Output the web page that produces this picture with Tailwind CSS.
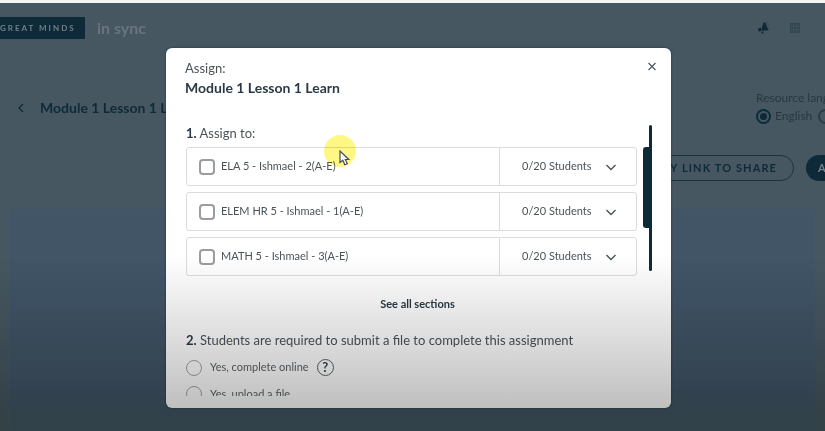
<!DOCTYPE html>
<html lang="en">
<head>
<meta charset="utf-8">
<title>Assign Module 1 Lesson 1 Learn</title>
<script src="https://cdn.jsdelivr.net/npm/@tailwindcss/browser@4"></script>
</head>
<body class="relative h-screen overflow-hidden bg-[#465761] font-['Lato',sans-serif] text-[#2b3a44]">
<div class="flex h-full flex-col border-t-3 border-[#f4f4f4]">
  <header class="flex h-[50px] shrink-0 items-center justify-between pr-6">
    <div class="flex items-center gap-3">
      <div class="flex h-[22px] w-[85px] items-center bg-[#0e2a38] text-[8px] font-bold tracking-[2px] whitespace-nowrap text-[#71808a]">GREAT MINDS</div>
      <span class="text-base font-bold text-[#68757e]">in sync</span>
    </div>
    <div class="flex items-center gap-[18px]">
      <button type="button" aria-label="Announcements" class="text-[#0e2a38]">
        <svg class="size-3.5" viewBox="0 0 14 14" fill="currentColor"><path d="M6.500 1.500 8 1.300 11.500 9.300 5.300 9.800 4.800 7z"/><path d="M1.200 7.600 3.900 6.700 5 9.200 2.300 10.500 1.200 9.700zM4.200 10.800 6.200 10.200 6.500 12.300 4.900 12.700z"/><path d="M9.200 2.700 10 1M10.300 4.800 12.300 3.300M11.700 7.200 13.500 7" stroke="currentColor" stroke-width=".7" opacity=".6"/></svg>
      </button>
      <button type="button" aria-label="Apps" class="text-[#2a3d49]">
        <svg class="size-3" viewBox="0 0 12 12" fill="none" stroke="currentColor"><path d="M1.500 1.500h2v2h-2zM5 1.500h2v2H5zM8.500 1.500h2v2h-2zM1.500 5h2v2h-2zM5 5h2v2H5zM8.500 5h2v2h-2zM1.500 8.500h2v2h-2zM5 8.500h2v2H5zM8.500 8.500h2v2h-2z" stroke-width=".8"/></svg>
      </button>
    </div>
  </header>
  <main class="flex min-h-0 grow flex-col overflow-hidden pt-9">
    <div class="flex shrink-0 items-start justify-between">
      <div class="flex items-center gap-3.5 pt-[9px] pl-4">
        <a href="#" aria-label="Back" class="text-[#0e2a38]"><svg class="size-2.5" viewBox="0 0 10 10" fill="none" stroke="currentColor" stroke-width="1.3"><path d="M7 1 3 5l4 4"/></svg></a>
        <h1 class="text-sm leading-5 font-bold whitespace-nowrap text-[#0e2a38]">Module 1 Lesson 1 Learn</h1>
      </div>
      <fieldset class="-mr-[42px] w-[111px] min-w-0 shrink-0 text-xs leading-[18px] whitespace-nowrap text-[#283842]">
        <legend>Resource language</legend>
        <div class="flex items-center gap-1.5">
          <label class="flex items-center gap-1"><input type="radio" name="lang" checked class="size-[15px] shrink-0 appearance-none rounded-full border-2 border-[#0e2a38] bg-[#0e2a38] bg-clip-content p-[2px]">English</label>
          <label class="flex items-center gap-1"><input type="radio" name="lang" class="size-[15px] shrink-0 appearance-none rounded-full border-2 border-[#2b3d48]">Spanish</label>
        </div>
      </fieldset>
    </div>
    <div class="-mr-[74px] flex shrink-0 justify-end gap-3 pt-[30px] text-[11px] font-bold tracking-widest">
      <button type="button" class="h-[26px] rounded-full border border-[#1d3340] px-4 text-[#0e2a38]">COPY LINK TO SHARE</button>
      <button type="button" class="h-[26px] w-[93px] rounded-full bg-[#0e2a38] px-3 text-left text-[#71808a]">ASSIGN</button>
    </div>
    <div class="mx-2.5 mt-7 grow bg-[#415567]"></div>
  </main>
</div>

<div class="absolute inset-0 pt-12 pr-[154px] pb-[23px] pl-[166px]">
  <section role="dialog" aria-labelledby="dialog-title" class="flex h-full flex-col rounded-md bg-white pb-3 shadow-[0_0_2px_#0e2a38]">
    <div class="flex items-start justify-between pt-2.5 pr-3 pl-[19px]">
      <div>
        <p class="text-[13px] leading-5 text-[#4b5359]">Assign:</p>
        <h2 id="dialog-title" class="text-sm leading-5 font-bold">Module 1 Lesson 1 Learn</h2>
      </div>
      <button type="button" aria-label="Close" class="mt-0.5"><svg class="size-3.5" viewBox="0 0 14 14" fill="none" stroke="#4f5961" stroke-width="1.2"><path d="m3.500 3 7 7m0-7-7 7"/></svg></button>
    </div>
    <div class="mt-[27px] flex min-h-0 grow overflow-hidden pr-[19px] pl-5">
      <form class="min-w-0 grow">
        <fieldset>
          <legend class="pb-1.5 text-[13px] leading-4 text-[#4b5359]"><b class="font-bold text-[#2b3a44]">1.</b> Assign to:</legend>
          <div class="flex flex-col gap-1.5 text-[11px] text-[#4b5359]">
            <div class="flex h-[39px] rounded-[3px] border border-[#dcdcdc]">
              <label class="flex grow items-center gap-1.5 pl-3"><input type="checkbox" class="size-4 appearance-none rounded-[4px] border-2 border-[#9a9c9f]">ELA 5 - Ishmael - 2(A-E)</label>
              <button type="button" class="flex w-[137px] items-center justify-between border-l border-[#dcdcdc] pr-[19px] pl-[22px]">0/20 Students<svg class="size-3" viewBox="0 0 12 12" fill="none" stroke="#4b5359" stroke-width="1.4"><path d="m1.500 4 4.500 4.500L10.500 4"/></svg></button>
            </div>
            <div class="flex h-[39px] rounded-[3px] border border-[#dcdcdc]">
              <label class="flex grow items-center gap-1.5 pl-3"><input type="checkbox" class="size-4 appearance-none rounded-[4px] border-2 border-[#9a9c9f]">ELEM HR 5 - Ishmael - 1(A-E)</label>
              <button type="button" class="flex w-[137px] items-center justify-between border-l border-[#dcdcdc] pr-[19px] pl-[22px]">0/20 Students<svg class="size-3" viewBox="0 0 12 12" fill="none" stroke="#4b5359" stroke-width="1.4"><path d="m1.500 4 4.500 4.500L10.500 4"/></svg></button>
            </div>
            <div class="flex h-[39px] rounded-[3px] border border-[#dcdcdc]">
              <label class="flex grow items-center gap-1.5 pl-3"><input type="checkbox" class="size-4 appearance-none rounded-[4px] border-2 border-[#9a9c9f]">MATH 5 - Ishmael - 3(A-E)</label>
              <button type="button" class="flex w-[137px] items-center justify-between border-l border-[#dcdcdc] pr-[19px] pl-[22px]">0/20 Students<svg class="size-3" viewBox="0 0 12 12" fill="none" stroke="#4b5359" stroke-width="1.4"><path d="m1.500 4 4.500 4.500L10.500 4"/></svg></button>
            </div>
          </div>
        </fieldset>
        <div class="flex justify-center pt-5 pl-3"><button type="button" class="text-[11px] leading-4 font-bold">See all sections</button></div>
        <div role="radiogroup" aria-labelledby="file-question" class="pt-5 text-[11px] text-[#5b6267]">
          <p id="file-question" class="text-[13px] leading-4 whitespace-nowrap text-[#4b5359]"><b class="font-bold text-[#2b3a44]">2.</b> Students are required to submit a file to complete this assignment</p>
          <div class="flex items-center gap-2 pt-[11px]">
            <label class="flex items-center gap-2"><input type="radio" name="file" class="size-4 appearance-none rounded-full border border-[#a0a3a7]">Yes, complete online</label>
            <button type="button" aria-label="Help" class="size-[17px] rounded-full border border-[#5b6267] text-[13px] leading-[15px] font-bold text-[#3d464d]">?</button>
          </div>
          <label class="flex items-center gap-2 pt-2.5"><input type="radio" name="file" class="size-4 appearance-none rounded-full border border-[#a0a3a7]">Yes, upload a file</label>
        </div>
      </form>
      <div class="ml-1.5 flex shrink-0 items-start">
        <div class="mt-[22px] h-[81px] w-1.5 rounded-l-[3px] bg-[#0e2a38]"></div>
        <div class="h-[146px] w-[3px] rounded-full bg-[#0e2a38]"></div>
      </div>
    </div>
  </section>
</div>

<div class="pointer-events-none absolute inset-x-0 top-[255px] bottom-0 bg-linear-to-b from-transparent via-black/20 via-70% to-[#0a1400]/30"></div>
<div class="pointer-events-none absolute top-[135px] left-[324px] size-8 rounded-full bg-[#fff01f]/55 mix-blend-multiply"></div>
<svg class="pointer-events-none absolute top-[150px] left-[339px] h-4 w-3" viewBox="0 0 12 16"><path d="M1 1v11.500l2.800-2.200 2 4.500 2.500-1.100-2-4.200h3.500z" fill="#fff" stroke="#4a4a5c" stroke-width="1.200"/></svg>
</body>
</html>
